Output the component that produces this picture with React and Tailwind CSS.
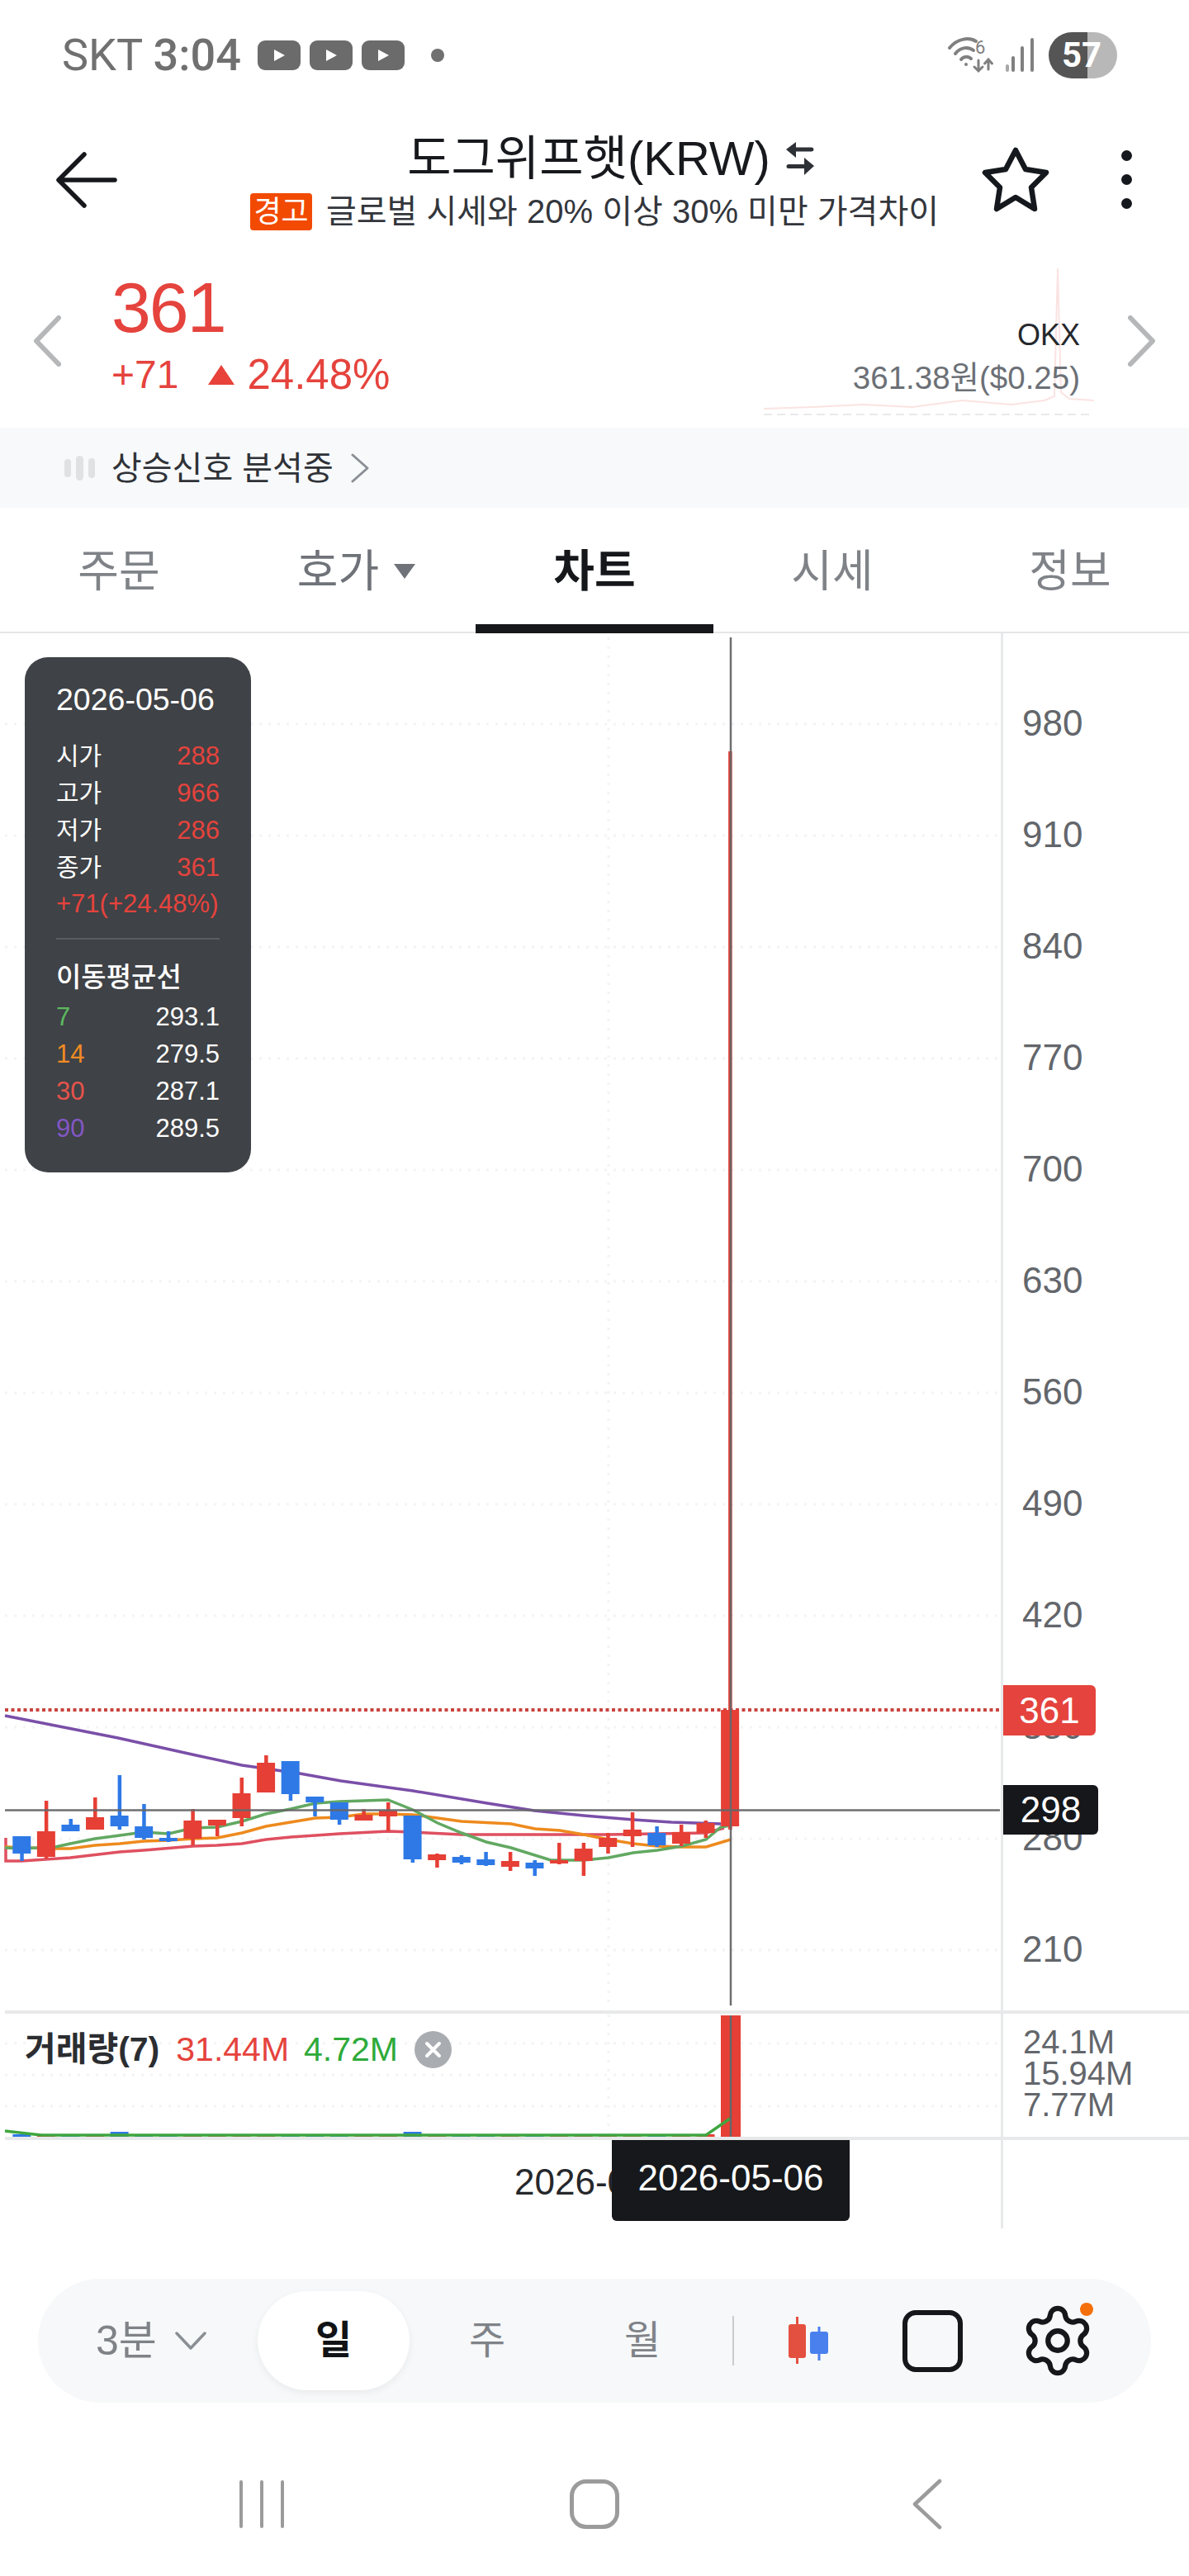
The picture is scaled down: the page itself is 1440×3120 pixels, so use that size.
import { Settings } from 'lucide-react';

const UI_FONT = "[font-family:'Liberation_Sans','Noto_Sans_CJK_KR',sans-serif]";

// [bodyTop, bodyBottom, wickTop, wickBottom, colour] in page pixels
const candles = [
    [2224, 2245, 2224, 2254, 'b'], [2218, 2249, 2181, 2251, 'r'], [2210, 2218, 2203, 2218, 'b'],
    [2201, 2216, 2177, 2216, 'r'], [2199, 2212, 2150, 2216, 'b'], [2212, 2226, 2185, 2228, 'b'],
    [2226, 2230, 2218, 2231, 'b'], [2205, 2227, 2191, 2235, 'r'], [2204, 2211, 2204, 2224, 'r'],
    [2172, 2202, 2153, 2212, 'r'], [2135, 2171, 2126, 2171, 'r'], [2133, 2173, 2133, 2181, 'b'],
    [2176, 2183, 2176, 2200, 'b'], [2183, 2204, 2183, 2210, 'b'], [2198, 2205, 2191, 2205, 'r'],
    [2193, 2200, 2183, 2218, 'r'], [2199, 2252, 2199, 2256, 'b'], [2246, 2253, 2245, 2262, 'r'],
    [2249, 2256, 2247, 2258, 'b'], [2252, 2259, 2243, 2260, 'b'], [2254, 2261, 2243, 2266, 'r'],
    [2256, 2263, 2253, 2272, 'b'], [2253, 2257, 2232, 2258, 'r'], [2239, 2254, 2232, 2272, 'r'],
    [2226, 2237, 2220, 2245, 'r'], [2216, 2224, 2195, 2237, 'r'], [2220, 2235, 2212, 2237, 'b'],
    [2219, 2233, 2210, 2236, 'r'], [2208, 2220, 2205, 2226, 'r'], [2071, 2212, 910, 2216, 'r'],
];
const candleX = i => 26.3 + 29.58 * i;

const purpleLine = '6,2078 143,2105 233,2125 293,2138 363,2148 413,2157 500,2169 590,2184 647,2193 707,2199 767,2204 813,2207 873,2209';
const greenLine = '6,2238 26,2239 67,2237 85,2233 115,2227 145,2223 174,2219 204,2221 234,2214 263,2213 293,2206 322,2197 352,2191 382,2184 411,2182 470,2180 500,2192 530,2208 559,2220 589,2231 619,2238 667,2253 707,2253 737,2250 767,2244 796,2241 826,2236 855,2228 873,2213 885,2211';
const orangeLine = '6,2237 67,2239 85,2239 115,2235 145,2233 174,2230 204,2229 234,2227 263,2226 293,2220 322,2212 352,2207 382,2202 411,2201 441,2197 470,2197 500,2198 530,2202 559,2206 619,2209 648,2215 678,2217 707,2222 737,2228 767,2233 796,2236 826,2237 855,2237 885,2228';
const crimsonLine = '7,2226 7,2254 26,2254 85,2250 145,2243 174,2241 234,2236 263,2235 293,2233 322,2228 352,2225 382,2223 411,2221 470,2218 500,2219 559,2222 678,2222 737,2222 855,2220 877,2214';

const axisLabels = [980, 910, 840, 770, 700, 630, 560, 490, 420, 350, 280, 210];
const gridYs = axisLabels.map((_, i) => 877 + 135 * i);
const priceRows = [['시가', '288'], ['고가', '966'], ['저가', '286'], ['종가', '361']];
const maRows = [
    ['7', '293.1', 'text-[#5cb85f]'],
    ['14', '279.5', 'text-[#f08a24]'],
    ['30', '287.1', 'text-[#e5534b]'],
    ['90', '289.5', 'text-[#8257c4]'],
];

function PlayIcon() {
    return (
        <svg width="52" height="36" viewBox="0 0 52 36" className="shrink-0">
            <rect width="52" height="36" rx="9" fill="#6b6b6b" />
            <path d="M20 11 L33 18 L20 25 Z" fill="#fff" />
        </svg>
    );
}

function StatusBar() {
    return (
        <div className="h-[130px] flex items-start pl-[75px] pr-[87px]">
            <div className="mt-[36px] h-[62px] leading-[62px] w-[216px] whitespace-nowrap text-[54px] text-[#707070] [font-family:'Roboto',sans-serif]">
                SKT <span className="font-medium">3:04</span>
            </div>
            <div className="mt-[49px] ml-[21px] flex items-center gap-[11px]">
                <PlayIcon />
                <PlayIcon />
                <PlayIcon />
                <span className="ml-[21px] w-[16px] h-[16px] rounded-full bg-[#707070]" />
            </div>
            <div className="ml-auto mt-[39px] flex items-center">
                {/* wifi + signal */}
                <svg width="108" height="56" viewBox="0 0 108 56" className="mr-[15px]" fill="none" stroke="#808080" strokeLinecap="round">
                    <path d="M3 19 C13 7 27 6 35 11" strokeWidth="4" />
                    <path d="M10 26 C16 18 26 17 32 22" strokeWidth="4" />
                    <path d="M17 33 C20 29 26 29 29 32" strokeWidth="4" />
                    <circle cx="23" cy="39" r="2" fill="#808080" stroke="none" />
                    <text x="34" y="26" fontSize="22" fill="#808080" stroke="none" className="[font-family:'Roboto',sans-serif]">6</text>
                    <path d="M38 34 V47 M33 42 L38 47 L43 42" strokeWidth="3" />
                    <path d="M50 45 V34 M45.5 38 L50 33 L54.5 38" strokeWidth="3" />
                    <path d="M73 41 V46" strokeWidth="4" stroke="#a8a8a8" />
                    <path d="M80 31 V46" strokeWidth="4" />
                    <path d="M91 19 V46" strokeWidth="4" />
                    <path d="M103 9 V46" strokeWidth="4" />
                </svg>
                <div className="w-[83px] h-[56px] rounded-full bg-[linear-gradient(90deg,#555555_57%,#b8b8b8_57%)] flex items-center justify-center pr-[3px] text-[42px] leading-none font-bold text-white [font-family:'Roboto',sans-serif]">
                    57
                </div>
            </div>
        </div>
    );
}

function Header() {
    return (
        <div className="h-[170px] grid grid-cols-[251px_938px_251px] items-start">
            <svg width="74" height="70" viewBox="0 0 74 70" className="ml-[68px] mt-[53px]" fill="none" stroke="#16181c" strokeWidth="5.5" strokeLinecap="round" strokeLinejoin="round">
                <path d="M71 35 H4 M34 4 L3 35 L34 66" />
            </svg>
            <div className="flex flex-col items-center">
                <div className="mt-[30px] h-[64px] pl-[39px] flex items-center text-[58px] leading-[64px] text-[#17191d] whitespace-nowrap">
                    도그위프햇(KRW)
                    <svg width="34" height="40" viewBox="0 0 34 40" className="ml-[19px] shrink-0" fill="#2e3136">
                        <path d="M0 9 L12 0 V6.5 H31 A2.5 2.5 0 0 1 31 11.5 H12 V19 Z" />
                        <path d="M34 29 L22 40 V32 H3 A2.5 2.5 0 0 1 3 27 H22 V19 Z" />
                    </svg>
                </div>
                <div className="mt-[9px] flex items-center whitespace-nowrap text-[40px] leading-[46px] text-[#33363c]">
                    <span className="w-[75px] h-[45px] rounded-[4px] bg-[#f24a00] text-white text-[36px] leading-[45px] text-center mr-[17px]">경고</span>
                    글로벌 시세와 20% 이상 30% 미만 가격차이
                </div>
            </div>
            <div className="flex items-start">
                <svg width="82" height="80" viewBox="0 0 82 80" className="mt-[48px]" fill="none" stroke="#15181c" strokeWidth="6.5" strokeLinejoin="round">
                    <path d="M41 4 L53 27 L78 31 L60 49 L64 75 L41 61 L18 75 L22 49 L4 31 L29 27 Z" />
                </svg>
                <div className="ml-[87px] mt-[52px] flex flex-col gap-[16px]">
                    <span className="w-[13px] h-[13px] rounded-full bg-[#15181c]" />
                    <span className="w-[13px] h-[13px] rounded-full bg-[#15181c]" />
                    <span className="w-[13px] h-[13px] rounded-full bg-[#15181c]" />
                </div>
            </div>
        </div>
    );
}

function PriceRow() {
    return (
        <div className="relative h-[218px] flex items-start pl-[40px] pr-[40px]">
            {/* faint sparkline behind the exchange price */}
            <svg width="400" height="180" viewBox="0 0 400 180" className="absolute left-[925px] top-[25px]" fill="none">
                <path d="M0 170 L60 168 L120 165 L180 168 L240 160 L300 165 L340 160 L352 155 L356 0 L360 150 L370 158 L400 160" stroke="#fbe3e2" strokeWidth="2" />
                <path d="M0 177 H398" stroke="#e9e9e9" strokeWidth="2" strokeDasharray="10 6" />
            </svg>
            <svg width="34" height="62" viewBox="0 0 34 62" className="relative mt-[82px] shrink-0" fill="none" stroke="#b5b7b9" strokeWidth="6" strokeLinecap="round" strokeLinejoin="round">
                <path d="M31 3 L4 31 L31 59" />
            </svg>
            <div className="relative ml-[61px] mt-[30px] text-[#e5433d]">
                <div className="h-[84px] text-[86px] leading-[84px] tracking-[-2px]">361</div>
                <div className="mt-[10px] h-[60px] flex items-center text-[48px] leading-[60px] whitespace-nowrap">
                    +71
                    <svg width="32" height="24" viewBox="0 0 32 24" className="ml-[36px] mr-[15px]" fill="#e8423a">
                        <path d="M16 0 L32 24 H0 Z" />
                    </svg>
                    <span className="text-[51px]">24.48%</span>
                </div>
            </div>
            <div className="relative ml-auto mr-[58px] mt-[84px] flex flex-col items-end whitespace-nowrap">
                <div className="h-[44px] text-[36px] leading-[44px] text-[#25282c]">OKX</div>
                <div className="mt-[8px] h-[44px] text-[38.5px] leading-[44px] text-[#6c7076]">361.38원($0.25)</div>
            </div>
            <svg width="34" height="62" viewBox="0 0 34 62" className="relative mt-[82px] shrink-0" fill="none" stroke="#b5b7b9" strokeWidth="6" strokeLinecap="round" strokeLinejoin="round">
                <path d="M3 3 L30 31 L3 59" />
            </svg>
        </div>
    );
}

function SignalBar() {
    return (
        <div className="h-[97px] bg-[#f7f9fa] flex items-center pl-[78px] text-[40px] leading-none text-[#2f3237]">
            <div className="flex items-center gap-[6px] mr-[20px]">
                <span className="w-[8px] h-[22px] rounded-full bg-[#dfe1e3]" />
                <span className="w-[9px] h-[30px] rounded-full bg-[#dfe1e3]" />
                <span className="w-[8px] h-[24px] rounded-full bg-[#dfe1e3]" />
            </div>
            상승신호 분석중
            <svg width="22" height="36" viewBox="0 0 22 36" className="ml-[21px]" fill="none" stroke="#8a8f95" strokeWidth="3" strokeLinecap="round" strokeLinejoin="round">
                <path d="M2 2 L20 18 L2 34" />
            </svg>
        </div>
    );
}

function Tabs() {
    return (
        <div className="h-[152px] grid grid-cols-5 border-b-2 border-[#e5e6e7] text-[54px] leading-none">
            <div className="flex items-center justify-center pt-[3px] text-[#7f8388]">주문</div>
            <div className="flex items-center justify-center pt-[3px] text-[#6f7379]">
                호가
                <svg width="28" height="20" viewBox="0 0 28 20" className="ml-[17px]" fill="#6f7379">
                    <path d="M1 1 H27 L14 19 Z" />
                </svg>
            </div>
            <div className="relative flex items-center justify-center pt-[3px] font-bold text-[#15171a]">
                차트
                <span className="absolute left-0 right-0 bottom-[-2px] h-[11px] bg-[#15171a]" />
            </div>
            <div className="flex items-center justify-center pt-[3px] text-[#7f8388]">시세</div>
            <div className="flex items-center justify-center pt-[3px] text-[#7f8388]">정보</div>
        </div>
    );
}

function OhlcTooltip() {
    return (
        <div className="absolute left-[30px] top-[29px] w-[274px] h-[624px] rounded-[28px] bg-[#3f4246] px-[38px] pt-[29px] text-[31px] leading-[45px] text-white">
            <div className="h-[44px] text-[37.5px] leading-[44px] whitespace-nowrap">2026-05-06</div>
            <div className="mt-[24px]">
                {priceRows.map(([label, value]) => (
                    <div key={label} className="h-[45px] flex justify-between">
                        <span className="text-[30px]">{label}</span>
                        <span className="text-[#e5433d]">{value}</span>
                    </div>
                ))}
                <div className="h-[44px] leading-[44px] text-[#e5433d] whitespace-nowrap">+71(+24.48%)</div>
            </div>
            <div className="mt-[19px] h-[2px] bg-[#5a5c60]" />
            <div className="mt-[24px] h-[44px] text-[33px] leading-[44px] font-medium whitespace-nowrap">이동평균선</div>
            <div className="mt-[3px]">
                {maRows.map(([label, value, color]) => (
                    <div key={label} className="h-[45px] flex justify-between">
                        <span className={color}>{label}</span>
                        <span>{value}</span>
                    </div>
                ))}
            </div>
        </div>
    );
}

function PriceChart() {
    return (
        <svg width="1213" height="1668" viewBox="0 767 1213 1668" className="block shrink-0" fill="none">
            {gridYs.map(y => (
                <path key={y} d={`M6 ${y} H1210`} stroke="#f3f4f5" strokeWidth="3" strokeDasharray="3 8" />
            ))}
            <path d="M737 772 V2429" stroke="#f3f4f5" strokeWidth="3" strokeDasharray="3 8" />
            <polyline points={crimsonLine} stroke="#df5060" strokeWidth="3.5" />
            <polyline points={orangeLine} stroke="#ee8a1d" strokeWidth="3.5" />
            <polyline points={greenLine} stroke="#62a862" strokeWidth="3.5" />
            <polyline points={purpleLine} stroke="#7a4fa8" strokeWidth="3.5" />
            <path d="M6 2071 H1212" stroke="#c9443e" strokeWidth="4" strokeDasharray="4 3.5" />
            {candles.map(([top, bottom, wickTop, wickBottom, c], i) => {
                const x = candleX(i);
                const color = c === 'r' ? '#e63f35' : '#2e79e6';
                return (
                    <g key={i} fill={color}>
                        <rect x={x - 2} y={wickTop} width="4.5" height={wickBottom - wickTop} />
                        <rect x={x - 11} y={top} width="22" height={bottom - top} />
                    </g>
                );
            })}
            {/* crosshair */}
            <path d="M885 772 V2429 M6 2192.5 H1211" stroke="#666669" strokeWidth="2.5" opacity="0.95" />
        </svg>
    );
}

function VolumeChart() {
    return (
        <svg width="1213" height="149" viewBox="0 2439 1213 149" className="block shrink-0" fill="none">
            {[2475, 2513, 2551].map(y => (
                <path key={y} d={`M6 ${y} H1210`} stroke="#f3f4f5" strokeWidth="3" strokeDasharray="3 8" />
            ))}
            <path d="M737 2440 V2588" stroke="#f3f4f5" strokeWidth="3" strokeDasharray="3 8" />
            {candles.slice(0, 29).map(([, , , , c], i) => {
                const tall = i === 4 || i === 16;
                return (
                    <rect key={i} x={candleX(i) - 11} y={tall ? 2582 : 2585} width="22" height={tall ? 6 : 3} fill={c === 'r' ? '#e63f35' : '#2e79e6'} />
                );
            })}
            <rect x="873" y="2441" width="24" height="147" fill="#e63f35" />
            <path d="M6 2581 L50 2586 L855 2586 L884 2566" stroke="#3fa63f" strokeWidth="3.5" />
            <path d="M885 2441 V2588" stroke="#666669" strokeWidth="2.5" />
        </svg>
    );
}

function Chart() {
    return (
        <div>
            <div className="relative flex h-[1668px]">
                <PriceChart />
                <div className="flex-1 border-l-[3px] border-[#e8e9ea] -ml-[1px] pl-[23px] pt-[41px] text-[44px] text-[#63666b]">
                    {axisLabels.map(label => (
                        <div key={label} className="h-[135px] leading-[135px]">{label}</div>
                    ))}
                </div>
                <OhlcTooltip />
                <div className="absolute left-[1215px] top-[1274px] w-[112px] h-[61px] rounded-r-[6px] bg-[#e5433d] text-white text-[44px] leading-[61px] text-center">361</div>
                <div className="absolute left-[1215px] top-[1395px] w-[115px] h-[60px] rounded-r-[6px] bg-[#15171b] text-white text-[44px] leading-[60px] text-center">298</div>
            </div>
            <div className="ml-[6px] h-[4px] bg-[#e8e9ea]" />
            <div className="relative flex h-[149px]">
                <VolumeChart />
                <div className="flex-1 border-l-[3px] border-[#e8e9ea] -ml-[1px] pl-[24px] pt-[15px] text-[40px] leading-[38px] text-[#63666b]">
                    <div>24.1M</div>
                    <div>15.94M</div>
                    <div>7.77M</div>
                </div>
                <div className="absolute left-[30px] top-[19px] h-[48px] flex items-center whitespace-nowrap text-[41px] leading-[48px]">
                    <span className="font-bold text-[#2b2d31]">거래량(7)</span>
                    <span className="ml-[20px] text-[#e5433d]">31.44M</span>
                    <span className="ml-[18px] text-[#2eaa3a]">4.72M</span>
                    <svg width="45" height="45" viewBox="0 0 45 45" className="ml-[20px]">
                        <circle cx="22.5" cy="22.5" r="22.5" fill="#a9acb0" />
                        <path d="M15 15 L30 30 M30 15 L15 30" stroke="#fff" strokeWidth="4" strokeLinecap="round" />
                    </svg>
                </div>
            </div>
            <div className="ml-[6px] h-[4px] bg-[#e8e9ea]" />
            <div className="relative flex h-[107px]">
                <div className="w-[1213px] pl-[623px] pt-[25px] text-[44px] leading-[52px] text-[#25272b] whitespace-nowrap">2026-0</div>
                <div className="flex-1 border-l-[3px] border-[#e8e9ea] -ml-[1px]" />
                <div className="absolute left-[741px] top-0 w-[288px] h-[98px] rounded-b-[6px] bg-[#16181b] text-white text-[44px] leading-[92px] text-center">2026-05-06</div>
            </div>
        </div>
    );
}

function Toolbar() {
    return (
        <div className="mt-[61px] mx-[46px] h-[150px] rounded-full bg-[#f6f8f9] flex items-center text-[48px] leading-none text-[#7f8388]">
            <div className="w-[266px] pl-[70px] flex items-center whitespace-nowrap">
                <span className="text-[50px]">3분</span>
                <svg width="38" height="22" viewBox="0 0 38 22" className="ml-[22px]" fill="none" stroke="#8a8f94" strokeWidth="3.5" strokeLinecap="round" strokeLinejoin="round">
                    <path d="M2 2 L19 20 L36 2" />
                </svg>
            </div>
            <div className="w-[184px] h-[120px] rounded-full bg-white shadow-[0_3px_10px_rgba(0,0,0,0.06)] flex items-center justify-center font-bold text-[#111316]">일</div>
            <div className="w-[188px] text-center">주</div>
            <div className="w-[188px] text-center">월</div>
            <span className="ml-[15px] w-[2px] h-[60px] bg-[#c9ccd0]" />
            <svg width="48" height="58" viewBox="0 0 48 58" className="ml-[66px] shrink-0">
                <rect x="0" y="9" width="21" height="41" rx="3" fill="#e4503f" />
                <rect x="9" y="0" width="3" height="57" fill="#e4503f" />
                <rect x="26" y="18" width="22" height="27" rx="3" fill="#4a80ee" />
                <rect x="35.5" y="12" width="3" height="41" fill="#4a80ee" />
            </svg>
            <span className="ml-[90px] w-[73px] h-[75px] rounded-[16px] border-[6px] border-[#15171a]" />
            <div className="relative ml-[68px] w-[94px] h-[94px]">
                <Settings size={94} strokeWidth={1.6} color="#15171a" />
                <span className="absolute left-[74px] top-[1px] w-[16px] h-[16px] rounded-full bg-[#f5700a]" />
            </div>
        </div>
    );
}

function NavBar() {
    return (
        <div className="flex items-center pt-[92px] pl-[290px]">
            <svg width="54" height="60" viewBox="0 0 54 60" stroke="#9b9b9b" strokeWidth="4" strokeLinecap="round" fill="none">
                <path d="M2 3 V57 M27 3 V57 M52 3 V57" />
            </svg>
            <span className="ml-[346px] w-[60px] h-[60px] rounded-[20px] border-[5px] border-[#9b9b9b]" />
            <svg width="36" height="62" viewBox="0 0 36 62" className="ml-[355px]" stroke="#9b9b9b" strokeWidth="4.5" strokeLinecap="round" strokeLinejoin="round" fill="none">
                <path d="M33 3 L3 31 L33 59" />
            </svg>
        </div>
    );
}

export default function App() {
    return (
        <div className={`w-[1440px] h-[3120px] overflow-hidden bg-white ${UI_FONT}`}>
            <StatusBar />
            <Header />
            <PriceRow />
            <SignalBar />
            <Tabs />
            <Chart />
            <Toolbar />
            <NavBar />
        </div>
    );
}
